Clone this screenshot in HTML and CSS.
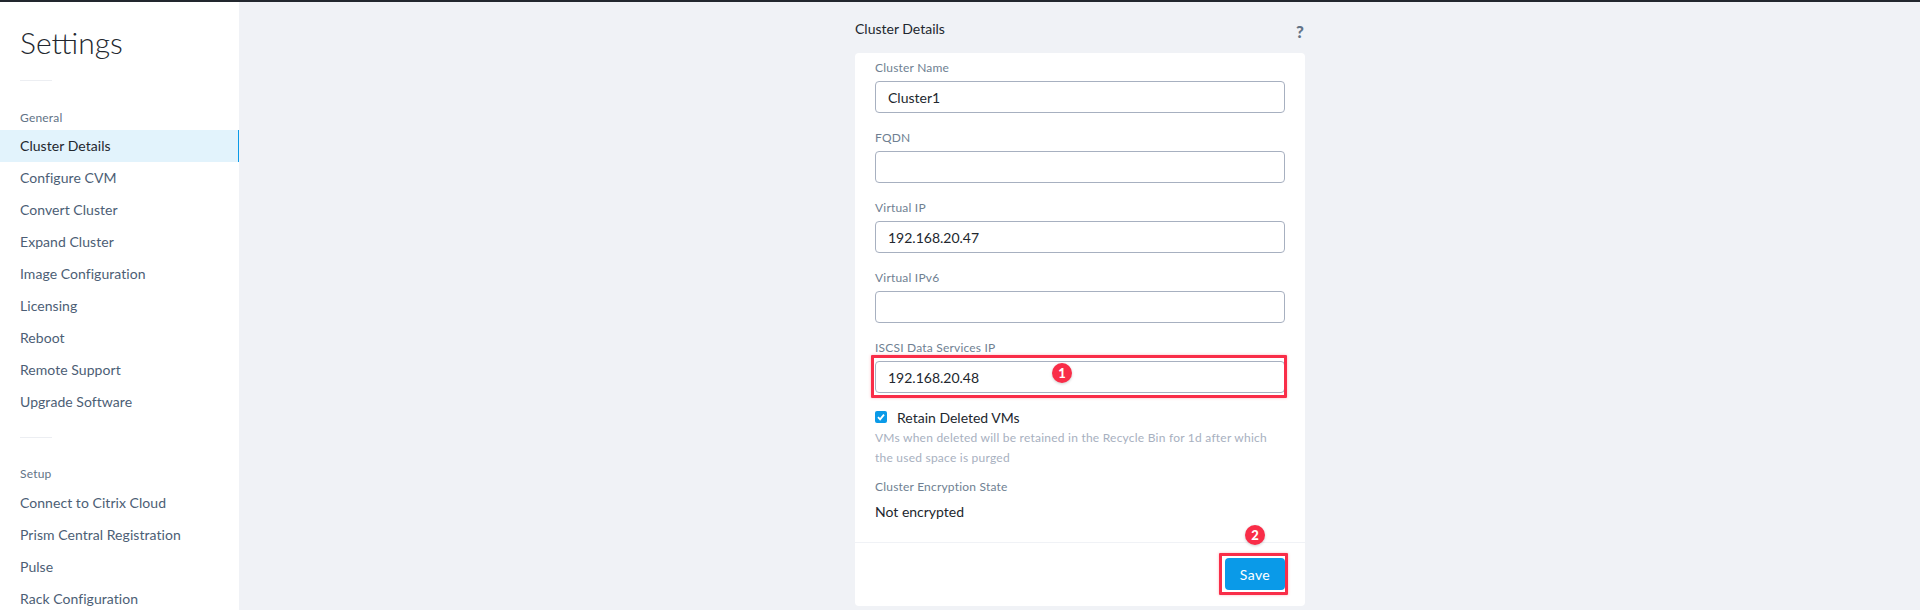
FILE: index.html
```html
<!DOCTYPE html>
<html lang="en">
<head>
    <meta charset="UTF-8">
    <title>Settings - Cluster Details</title>
    <link rel="stylesheet" href="styles.css">
</head>
<body>
    <div class="topbar"></div>
    <div class="layout">
        <aside class="sidebar">
            <h1 class="sidebar-title">Settings</h1>
            <div class="rule rule-first"></div>
            <div class="group-label">General</div>
            <a class="nav-item active">Cluster Details</a>
            <a class="nav-item">Configure CVM</a>
            <a class="nav-item">Convert Cluster</a>
            <a class="nav-item">Expand Cluster</a>
            <a class="nav-item">Image Configuration</a>
            <a class="nav-item">Licensing</a>
            <a class="nav-item">Reboot</a>
            <a class="nav-item">Remote Support</a>
            <a class="nav-item">Upgrade Software</a>
            <div class="rule rule-second"></div>
            <div class="group-label group-setup">Setup</div>
            <a class="nav-item">Connect to Citrix Cloud</a>
            <a class="nav-item">Prism Central Registration</a>
            <a class="nav-item">Pulse</a>
            <a class="nav-item">Rack Configuration</a>
        </aside>
        <main class="content">
            <div class="panel">
                <div class="panel-head">
                    <h2 class="panel-title">Cluster Details</h2>
                    <span class="help">?</span>
                </div>
                <form class="card">
                    <div class="card-body">
                        <div class="field">
                            <label class="field-label">Cluster Name</label>
                            <input class="text-input" type="text" value="Cluster1">
                        </div>
                        <div class="field">
                            <label class="field-label">FQDN</label>
                            <input class="text-input" type="text">
                        </div>
                        <div class="field">
                            <label class="field-label">Virtual IP</label>
                            <input class="text-input" type="text" value="192.168.20.47">
                        </div>
                        <div class="field">
                            <label class="field-label">Virtual IPv6</label>
                            <input class="text-input" type="text">
                        </div>
                        <div class="field">
                            <label class="field-label">ISCSI Data Services IP</label>
                            <div class="marked">
                                <input class="text-input" type="text" value="192.168.20.48">
                                <span class="callout callout-input"></span>
                                <span class="badge badge-input">1</span>
                            </div>
                        </div>
                        <div class="check-row">
                            <span class="checkbox">
                                <svg width="12" height="12" viewBox="0 0 12 12"><path d="M3 6.2 5.1 8.4 9 3.6" fill="none" stroke="#fff" stroke-width="1.8"/></svg>
                            </span>
                            <span class="check-label">Retain Deleted VMs</span>
                        </div>
                        <p class="hint">VMs when deleted will be retained in the Recycle Bin for 1d after which the used space is purged</p>
                        <div class="field-label state-label">Cluster Encryption State</div>
                        <div class="state-value">Not encrypted</div>
                    </div>
                    <div class="card-foot">
                        <div class="marked">
                            <button class="save-btn" type="button">Save</button>
                            <span class="callout callout-save"></span>
                            <span class="badge badge-save">2</span>
                        </div>
                    </div>
                </form>
            </div>
        </main>
    </div>
</body>
</html>
```

FILE: styles.css
```css
html,body{margin:0;padding:0;height:610px;overflow:hidden;}
body{font-family:"Lato","Open Sans",sans-serif;background-color:#f0f2f6;color:#22272e;}
.topbar{height:2px;background-color:#22272e;}
.layout{display:flex;height:608px;overflow:hidden;}

.sidebar{width:239px;flex:none;box-sizing:border-box;background-color:#fff;overflow:hidden;}
.sidebar-title{margin:0;padding:17px 0 0 20px;height:46px;font-size:30px;line-height:46px;font-weight:300;color:#22272e;}
.rule{width:32px;height:1px;margin-left:20px;background-color:#eceef2;}
.rule-first{margin-top:15px;}
.rule-second{margin-top:19px;}
.group-label{margin:30px 0 0 20px;height:13px;font-size:12px;line-height:13px;color:#627386;letter-spacing:.2px;}
.group-setup{margin-top:29px;height:15px;line-height:14px;margin-bottom:-1px;}
.group-label + .nav-item{margin-top:6px;}
.nav-item{display:block;height:32px;padding-left:20px;font-size:14px;line-height:32px;color:#4c5e75;letter-spacing:.05px;}
.nav-item.active{background-color:#e2f3fc;color:#22272e;box-shadow:inset -1px 0 0 #0a9ae8;}

.content{flex:1;display:flex;justify-content:center;padding-left:1px;}
.panel{width:450px;}
.panel-head{display:flex;justify-content:space-between;height:51px;}
.panel-title{margin:0;padding-top:18px;font-size:14px;line-height:17px;font-weight:400;color:#22272e;}
.help{margin:21px 1px 0 0;font-size:17px;line-height:17px;font-weight:900;color:#627386;}

.card{background-color:#fff;border-radius:4px;height:553px;display:flex;flex-direction:column;}
.card-body{flex:none;height:490px;box-sizing:border-box;padding:8px 20px 0;border-bottom:1px solid #f0f2f6;}
.field{height:70px;}
.field-label{display:block;height:21px;margin-top:-1px;font-size:12px;line-height:15px;color:#6f7f92;letter-spacing:.2px;}
.field + .field{padding-top:1px;height:69px;}
.marked{position:relative;}
.text-input{display:block;width:100%;height:32px;box-sizing:border-box;padding:0 12px;border:1px solid #a7b0c0;border-radius:4px;font-family:inherit;font-size:14px;color:#22272e;background-color:#fff;outline:none;}

.callout{position:absolute;border:3px solid #f92d48;border-radius:1px;box-shadow:0 0 3px rgba(249,45,72,.35);pointer-events:none;}
.callout-input{left:-4px;right:-2px;top:-6px;bottom:-5px;}
.callout-save{left:-6px;right:-3px;top:-5px;bottom:-5px;}
.badge{position:absolute;width:20px;height:20px;border-radius:50%;background-color:#f92d48;color:#fff;font-size:13px;line-height:20px;font-weight:900;text-align:center;box-shadow:0 1px 3px rgba(0,0,0,.2);}
.badge-input{left:177px;top:2px;}
.badge-save{left:20px;top:-33px;}

.check-row{display:flex;align-items:center;height:14px;}
.checkbox{display:flex;width:12px;height:12px;border-radius:2px;background-color:#0a9ae8;}
.check-label{margin-left:10px;font-size:14px;color:#22272e;}
.hint{margin:4px 0 0;font-size:12px;line-height:20px;color:#a7b0c0;letter-spacing:.23px;}
.state-label{margin-top:11px;height:auto;}
.state-value{margin-top:9px;font-size:14px;line-height:17px;color:#22272e;}

.card-foot{flex:1;display:flex;justify-content:flex-end;align-items:flex-start;padding:15px 20px 0 0;}
.save-btn{display:block;width:60px;height:32px;padding:0;border:none;border-radius:4px;background-color:#0a9ae8;color:#fff;font-family:inherit;font-size:14px;letter-spacing:.4px;}
```
